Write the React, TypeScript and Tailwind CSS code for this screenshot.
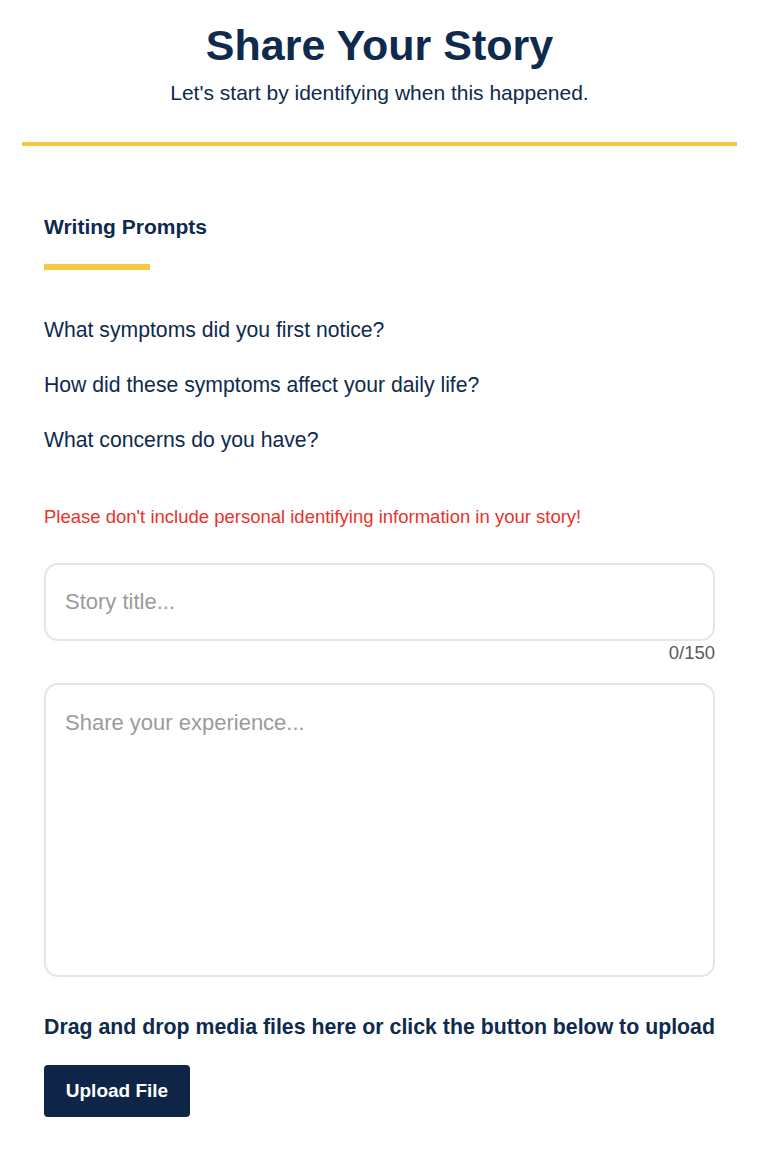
export default function App() {
  return (
    <div
      className="min-h-screen bg-white pl-[22px] pr-[29px] text-[#0e2a4d]"
      style={{ fontFamily: '"Liberation Sans", Arial, sans-serif' }}
    >
      <header className="border-b-4 border-[#f5ca41] pt-[19px] pb-[37px] text-center">
        <h1 className="text-[43px] font-bold leading-[52px]">Share Your Story</h1>
        <p className="mt-[10px] text-[21px] leading-[24px]">
          Let&apos;s start by identifying when this happened.
        </p>
      </header>

      <main className="px-[22px] pt-[69px] pb-8">
        <h2 className="text-[21px] font-bold leading-[24px]">Writing Prompts</h2>
        <div className="mt-[25px] h-[6px] w-[106px] bg-[#f5ca41]" />

        <ul className="mt-[48px] flex flex-col gap-[31px] text-[21.2px] leading-[24px]">
          <li>What symptoms did you first notice?</li>
          <li>How did these symptoms affect your daily life?</li>
          <li>What concerns do you have?</li>
        </ul>

        <p className="mt-[55px] text-[18.5px] leading-[20px] text-[#e8322a]">
          Please don&apos;t include personal identifying information in your story!
        </p>

        <div className="mt-[36px]">
          <input
            type="text"
            placeholder="Story title..."
            className="h-[78px] w-full rounded-[14px] border-2 border-[#e6e6e6] px-[19px] text-[22px] outline-none placeholder:text-[#9b9b9b]"
          />
          <div className="mt-[1px] text-right text-[18.5px] leading-[22px] text-[#5a5a5a]">0/150</div>
        </div>

        <textarea
          placeholder="Share your experience..."
          className="mt-[19px] block h-[294px] w-full resize-none rounded-[14px] border-2 border-[#e6e6e6] px-[19px] pt-[26px] text-[22px] leading-[24px] outline-none placeholder:text-[#9b9b9b]"
        />

        <p className="mt-[38px] whitespace-nowrap text-[21.3px] font-bold leading-[24px]">
          Drag and drop media files here or click the button below to upload
        </p>
        <button
          type="button"
          className="mt-[26px] h-[52px] w-[146px] rounded-[4px] bg-[#0e2548] text-[19px] font-bold text-white"
        >
          Upload File
        </button>
      </main>
    </div>
  );
}
